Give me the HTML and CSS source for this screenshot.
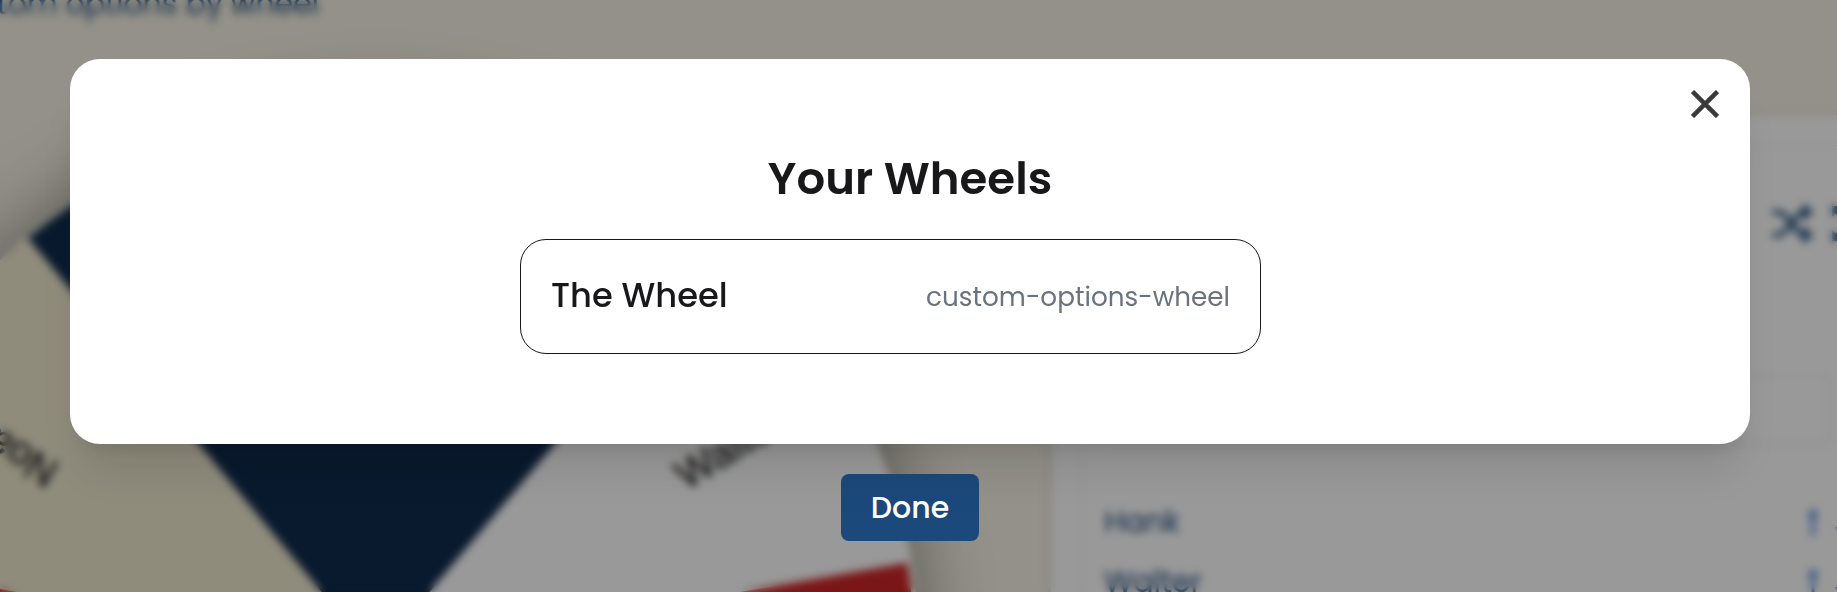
FILE: index.html
```html
<!DOCTYPE html>
<html lang="en">
<head>
    <meta charset="UTF-8">
    <meta name="viewport" content="width=device-width, initial-scale=1.0">
    <title>Your Wheels</title>
    <link rel="stylesheet" href="styles.css">
</head>
<body>

    <div class="page">
        <p class="tagline">custom options by wheel</p>

        <svg class="wheel" viewBox="-545 -545 1090 1090">
            <circle r="540" fill="#cd2628"/>
            <path d="M0 0 L-536.700 -96 A545 545 0 0 1 -347 -418 Z" fill="#eee9cf"/>
            <path d="M0 0 L-347 -418 A545 545 0 0 1 352 -415 Z" fill="#0f2b4d"/>
            <path d="M0 0 L352 -415 A545 545 0 0 1 536.700 -94 Z" fill="#fff"/>
            <text class="wheel-label" x="352" y="18" transform="rotate(-31)">Walter</text>
            <text class="wheel-label" x="368" y="9" transform="rotate(210)">Noah</text>
        </svg>

        <div class="panel">
            <div class="panel-card">
                <div class="tools">
                    <svg class="tool" viewBox="0 0 42 42"><path class="line" d="M3 10h4c4 0 6 2 9 6l9 11c3 4 4 6 8 6M3 33h4c4 0 6-2 9-6l9-11c3-4 4-6 8-6"/><path d="M32 1v18l10-9zM32 24v18l10-9z"/></svg>
                    <svg class="tool" viewBox="0 0 42 42"><path class="line" d="M6 10 38 33M38 10 6 33"/><path d="M1 4h11L1 15zM1 39h11L1 28z"/></svg>
                </div>
                <div class="entry"></div>
                <div class="row">
                    <span>Hank</span>
                    <span class="arrows">
                        <svg viewBox="0 0 14 30"><path d="M7 1 12 10H8.500V29H5.500V10H2z"/></svg>
                        <svg viewBox="0 0 14 30"><path d="M7 29 2 20H5.500V1H8.500V20H12z"/></svg>
                    </span>
                </div>
                <div class="row">
                    <span>Walter</span>
                    <span class="arrows">
                        <svg viewBox="0 0 14 30"><path d="M7 1 12 10H8.500V29H5.500V10H2z"/></svg>
                        <svg viewBox="0 0 14 30"><path d="M7 29 2 20H5.500V1H8.500V20H12z"/></svg>
                    </span>
                </div>
            </div>
        </div>
    </div>

    <div class="overlay">
        <div class="modal">
            <button class="close" aria-label="Close">
                <svg viewBox="0 0 28 28"><path d="M1.500 1.500 26.500 26.500M26.500 1.500 1.500 26.500"/></svg>
            </button>
            <h1>Your Wheels</h1>
            <div class="wheel-item">
                <span class="wheel-name">The Wheel</span>
                <span class="wheel-type">custom-options-wheel</span>
            </div>
        </div>
        <button class="done">Done</button>
    </div>

</body>
</html>
```

FILE: styles.css
```css
* {
    box-sizing: border-box;
}

body {
    font-family: Poppins, Inter, "Open Sans", sans-serif;
    margin: 0;
    height: 100vh;
    overflow: hidden;
    background-color: #f5f2e4;
    color: #18181b;
}

button {
    border: none;
    padding: 0;
    font-family: inherit;
    cursor: pointer;
}

/* page behind the modal */
.page {
    position: relative;
    height: 592px;
    overflow: hidden;
    background-color: #f5f2e4;
    color: #1d4a7d;
}

.tagline {
    position: absolute;
    top: -16px;
    right: 1518px;
    margin: 0;
    font-size: 30px;
    line-height: 40px;
    white-space: nowrap;
}

.wheel {
    position: absolute;
    left: -170px;
    top: 111px;
    width: 1090px;
    height: 1090px;
    border-radius: 50%;
    box-shadow: 0 0 75px rgba(0, 0, 0, 0.45);
}

.wheel-label {
    font-family: "Liberation Sans", Arial, sans-serif;
    font-size: 41px;
    fill: #222;
    stroke: #222;
    stroke-width: 0.6;
}

.panel {
    position: absolute;
    left: 1051px;
    top: 115px;
    width: 840px;
    height: 600px;
    padding: 30px;
    background-color: #fff;
    box-shadow: 0 1px 8px rgba(0, 0, 0, 0.2);
}

.panel-card {
    height: 600px;
    padding: 56px 22px;
    border: 1px solid #eee;
}

.tools {
    display: flex;
    gap: 18px;
    padding-left: 667px;
}

.tool {
    flex: none;
    width: 42px;
    height: 42px;
    fill: #1d4a7d;
}

.tool .line {
    fill: none;
    stroke: #1d4a7d;
    stroke-width: 4.5;
    stroke-linecap: round;
}

.entry {
    width: 726px;
    height: 71px;
    margin: 131px 0 46px;
    border: 2px solid #ececec;
    border-radius: 6px;
}

.row {
    display: flex;
    justify-content: space-between;
    align-items: center;
    width: 743px;
    height: 60px;
    font-size: 30px;
}

.arrows {
    display: flex;
    gap: 13px;
    fill: #2f6fd6;
}

.arrows svg {
    display: block;
    width: 14px;
    height: 30px;
}

/* modal */
.overlay {
    position: absolute;
    inset: 0;
    display: flex;
    flex-direction: column;
    align-items: center;
    gap: 30px;
    padding: 59px 17px 0 0;
    background-color: rgba(0, 0, 0, 0.4);
    backdrop-filter: blur(4px);
}

.modal {
    position: relative;
    display: flex;
    flex-direction: column;
    align-items: center;
    width: 1680px;
    height: 385px;
    padding-top: 90px;
    border-radius: 30px;
    background-color: #fff;
    box-shadow: 0 37px 47px -9px rgba(0, 0, 0, 0.1), 0 15px 19px -11px rgba(0, 0, 0, 0.1);
}

.close {
    position: absolute;
    top: 31px;
    right: 31px;
    width: 28px;
    height: 28px;
    background: none;
}

.close svg {
    display: block;
    fill: none;
    stroke: #3a3a3a;
    stroke-width: 4.5;
}

h1 {
    margin: 0;
    font-size: 45px;
    line-height: 60px;
    font-weight: 600;
    white-space: nowrap;
}

.wheel-item {
    display: flex;
    justify-content: space-between;
    align-items: center;
    width: 741px;
    height: 115px;
    margin: 30px 39px 0 0;
    padding: 0 30px;
    border: 1px solid #18181b;
    border-radius: 26px;
}

.wheel-name {
    padding-bottom: 2px;
    font-size: 33.75px;
    font-weight: 500;
}

.wheel-type {
    font-size: 26.25px;
    color: #6b7280;
}

.done {
    width: 138px;
    height: 67px;
    border-radius: 8px;
    background-color: #1c497c;
    color: #fff;
    font-size: 30px;
    font-weight: 500;
}
```
